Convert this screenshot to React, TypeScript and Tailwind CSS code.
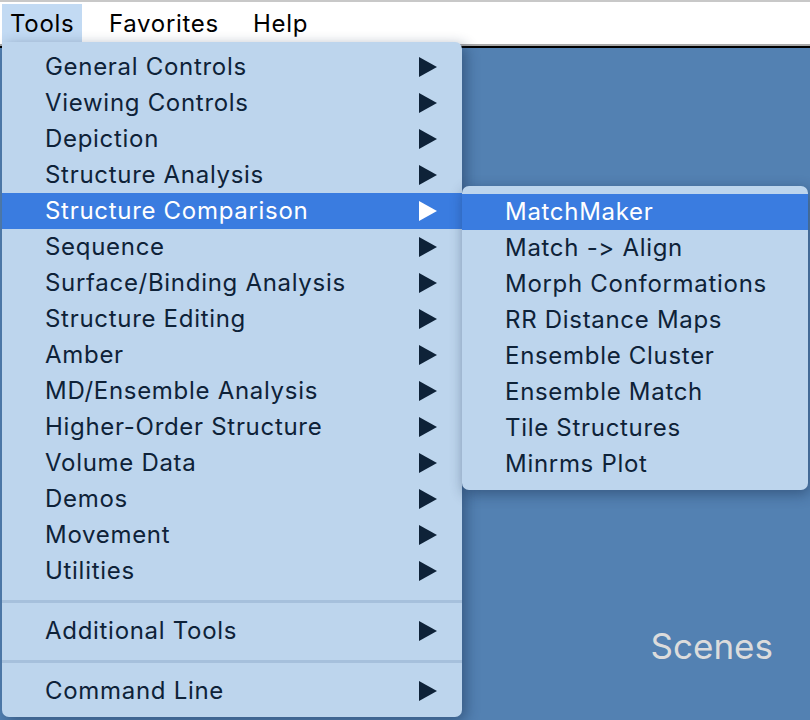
import React from 'react';

const mainItems = [
    'General Controls',
    'Viewing Controls',
    'Depiction',
    'Structure Analysis',
    'Structure Comparison',
    'Sequence',
    'Surface/Binding Analysis',
    'Structure Editing',
    'Amber',
    'MD/Ensemble Analysis',
    'Higher-Order Structure',
    'Volume Data',
    'Demos',
    'Movement',
    'Utilities',
];

const subItems = [
    'MatchMaker',
    'Match -> Align',
    'Morph Conformations',
    'RR Distance Maps',
    'Ensemble Cluster',
    'Ensemble Match',
    'Tile Structures',
    'Minrms Plot',
];

function Arrow({ active }: { active?: boolean }) {
    return (
        <svg width="18" height="20" viewBox="0 0 18 20" className="shrink-0">
            <polygon points="0,0 18,10 0,20" fill={active ? '#ffffff' : '#0e2238'} />
        </svg>
    );
}

function MenuRow({ label, active }: { label: string; active?: boolean }) {
    return (
        <div
            className={`flex h-[36px] items-center justify-between pl-[43px] pr-[25px] ${
                active ? 'bg-[#3a7ce0] text-white' : 'text-[#0e2238]'
            }`}
        >
            <span>{label}</span>
            <Arrow active={active} />
        </div>
    );
}

function Separator() {
    return (
        <div className="flex h-[24px] items-center">
            <div className="h-[3px] w-full bg-[#a6c0dc]" />
        </div>
    );
}

export default function App() {
    return (
        <div
            className="relative flex h-[720px] w-[810px] flex-col overflow-hidden bg-[#5381b2] text-[24px] tracking-[0.7px]"
            style={{ fontFamily: 'Inter, "Noto Sans", sans-serif', fontVariantLigatures: 'none', fontFeatureSettings: '"calt" 0' }}
        >
            {/* window menu bar */}
            <div className="h-[2px] bg-[#c8c8c8]" />
            <div className="flex h-[42px] items-start bg-white pt-[2px] text-black">
                <div className="ml-[2px] flex h-[40px] w-[80px] items-center bg-[#c2daf3] pl-[8px]">Tools</div>
                <div className="ml-[27px] flex h-[40px] items-center">Favorites</div>
                <div className="ml-[34px] flex h-[40px] items-center">Help</div>
            </div>
            <div className="h-[2px] bg-[#a9a9a9]" />
            <div className="h-[2px] bg-black" />

            <div className="flex flex-1 items-end justify-end pb-[48px] pr-[37px]">
                <span className="text-[35px] tracking-normal text-[#dcdcdc]">Scenes</span>
            </div>

            {/* Tools dropdown */}
            <div className="absolute left-[2px] top-[42px] w-[460px] rounded-b-[7px] rounded-tr-[7px] bg-[#bdd5ed] pb-[8px] pt-[7px] shadow-[4px_4px_14px_rgba(20,40,70,0.45)]">
                {mainItems.map((item) => (
                    <MenuRow key={item} label={item} active={item === 'Structure Comparison'} />
                ))}
                <Separator />
                <MenuRow label="Additional Tools" />
                <Separator />
                <MenuRow label="Command Line" />
            </div>

            {/* Structure Comparison submenu */}
            <div className="absolute left-[462px] top-[186px] w-[346px] rounded-[7px] bg-[#bdd5ed] py-[8px] shadow-[2px_4px_14px_rgba(20,40,70,0.45)]">
                {subItems.map((item, i) => (
                    <div
                        key={item}
                        className={`flex h-[36px] items-center pl-[43px] ${
                            i === 0 ? 'bg-[#3a7ce0] text-white' : 'text-[#0e2238]'
                        }`}
                    >
                        {item}
                    </div>
                ))}
            </div>
        </div>
    );
}
